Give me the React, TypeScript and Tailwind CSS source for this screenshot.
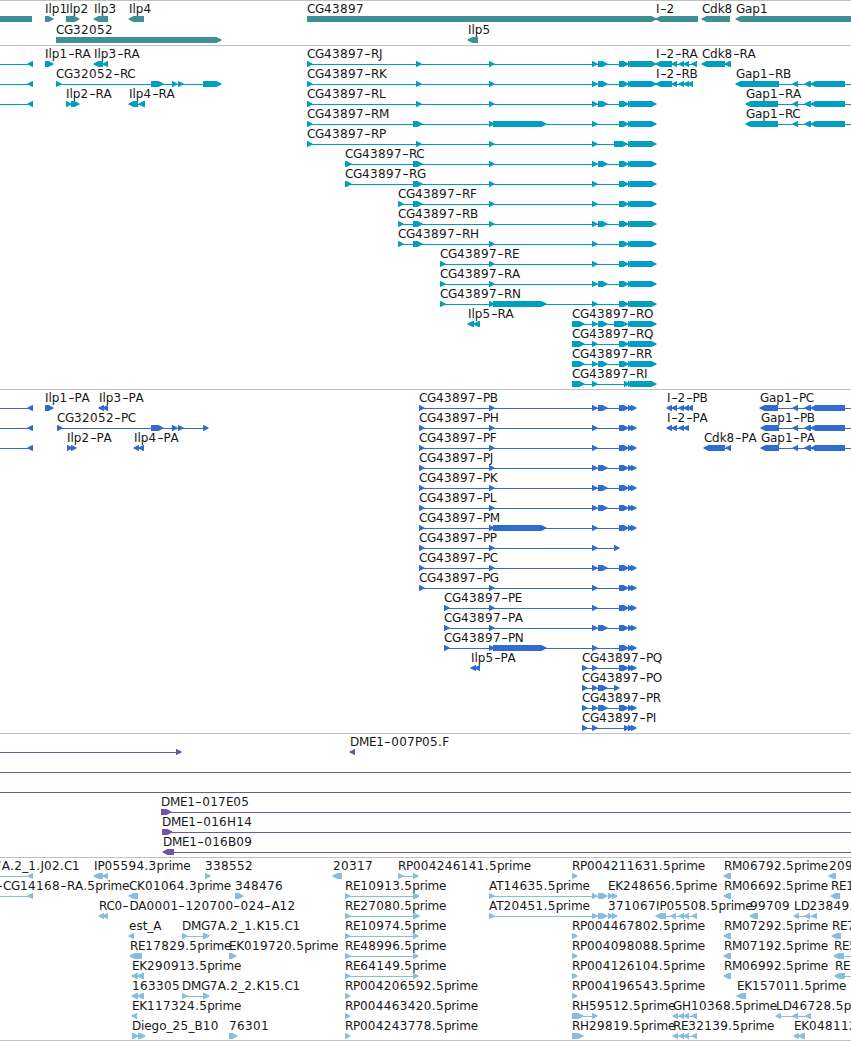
type Block = [number, number];

type Feature = {
  name?: string;
  dir: 'left' | 'right';
  blocks: Block[];
  // connecting line, when it runs past the blocks
  line?: Block;
  labelX?: number;
};

type Track = {
  title: string;
  color: string;
  rowClass: string;
  padClass: string;
  rows: Feature[][];
};

const WIDTH = 851;

const right = (name: string, ...blocks: Block[]): Feature => ({ name, dir: 'right', blocks });
const left = (name: string, ...blocks: Block[]): Feature => ({ name, dir: 'left', blocks });

const e = (x: number): Block => [x, x + 5];

// exons shared by the CG43897 isoforms
const mid: Block = [598, 607];
const long: Block = [493, 546];
const tail: Block[] = [[619, 628], [628, 632], [630, 656]];
const cdsTail: Block[] = [[619, 628], [628, 633], [631, 636]];

const offscreen: Feature = { dir: 'left', blocks: [[28, 33]], line: [0, 33] };

const gap1 = (name: string, a: number, b: number): Feature => ({
  name,
  dir: 'left',
  blocks: [[a, b], [793, 798], [805, 811], [811, 845]],
  line: [a, WIDTH],
});

const genes: Feature[][] = [
  [
    { dir: 'left', blocks: [[-20, 32]] },
    right('Ilp1', [45, 53]),
    right('Ilp2', [66, 79]),
    left('Ilp3', [94, 108]),
    left('Ilp4', [129, 144]),
    right('CG43897', [307, 656]),
    left('I-2', [656, 698]),
    left('Cdk8', [702, 730]),
    left('Gap1', [736, 870]),
  ],
  [right('CG32052', [56, 221]), left('Ilp5', [468, 478])],
];

const transcripts: Feature[][] = [
  [
    offscreen,
    right('Ilp1-RA', [45, 53]),
    left('Ilp3-RA', [94, 103], [103, 108]),
    right('CG43897-RJ', e(307), e(416), e(489), e(592), mid, ...tail),
    left('I-2-RA', [656, 672], [672, 677], [679, 684], [684, 689], [692, 697]),
    left('Cdk8-RA', [702, 725], [725, 731]),
  ],
  [
    offscreen,
    right('CG32052-RC', e(56), [151, 163], e(172), e(178), [203, 221]),
    right('CG43897-RK', e(307), e(416), e(489), e(592), mid, ...tail),
    left('I-2-RB', [656, 672], [672, 677], [679, 684], [684, 689], [688, 693]),
    gap1('Gap1-RB', 736, 779),
  ],
  [
    offscreen,
    right('Ilp2-RA', e(66), [71, 79]),
    left('Ilp4-RA', [129, 138], [139, 145]),
    right('CG43897-RL', e(307), e(416), e(489), e(592), mid, ...tail),
    gap1('Gap1-RA', 746, 778),
  ],
  [
    right('CG43897-RM', e(307), [413, 422], e(489), long, e(592), ...tail),
    gap1('Gap1-RC', 746, 778),
  ],
  [right('CG43897-RP', e(307), e(416), e(489), e(592), [614, 627], [628, 632], [630, 656])],
  [right('CG43897-RC', [345, 351], [413, 422], e(489), e(592), mid, ...tail)],
  [right('CG43897-RG', [345, 351], [413, 422], e(489), e(592), ...tail)],
  [right('CG43897-RF', e(398), [413, 422], e(489), e(592), ...tail)],
  [right('CG43897-RB', e(398), [413, 422], e(489), e(592), mid, ...tail)],
  [right('CG43897-RH', e(398), [413, 422], e(489), e(592), ...tail)],
  [right('CG43897-RE', e(440), e(489), e(592), ...tail)],
  [right('CG43897-RA', e(440), e(489), e(592), mid, ...tail)],
  [right('CG43897-RN', e(440), e(489), long, e(592), ...tail)],
  [
    left('Ilp5-RA', [468, 474], [474, 480]),
    right('CG43897-RO', [572, 584], e(592), mid, [614, 627], [628, 632], [630, 656]),
  ],
  [right('CG43897-RQ', [572, 584], e(592), ...tail)],
  [right('CG43897-RR', [572, 584], e(592), mid, ...tail)],
  [right('CG43897-RI', [572, 584], e(592), e(624), [628, 632], [630, 656])],
];

const proteins: Feature[][] = [
  [
    offscreen,
    right('Ilp1-PA', [45, 53]),
    left('Ilp3-PA', e(99), e(103)),
    right('CG43897-PB', e(419), e(489), e(592), mid, ...cdsTail),
    left('I-2-PB', e(667), e(672), e(679), e(684), e(688)),
    gap1('Gap1-PC', 760, 778),
  ],
  [
    offscreen,
    right('CG32052-PC', e(57), [151, 163], e(172), e(178), e(203)),
    right('CG43897-PH', e(419), e(489), e(592), ...cdsTail),
    left('I-2-PA', e(667), e(672), e(679), e(684)),
    gap1('Gap1-PB', 761, 779),
  ],
  [
    offscreen,
    right('Ilp2-PA', e(67), e(71)),
    left('Ilp4-PA', e(134), e(139)),
    right('CG43897-PF', e(419), e(489), e(592), ...cdsTail),
    left('Cdk8-PA', [704, 725], e(726)),
    gap1('Gap1-PA', 761, 779),
  ],
  [right('CG43897-PJ', e(419), e(489), e(592), mid, ...cdsTail)],
  [right('CG43897-PK', e(419), e(489), e(592), mid, ...cdsTail)],
  [right('CG43897-PL', e(419), e(489), e(592), mid, ...cdsTail)],
  [right('CG43897-PM', e(419), e(489), long, e(592), ...cdsTail)],
  [right('CG43897-PP', e(419), e(489), e(592), e(614))],
  [right('CG43897-PC', e(419), e(489), e(592), mid, ...cdsTail)],
  [right('CG43897-PG', e(419), e(489), e(592), ...cdsTail)],
  [right('CG43897-PE', e(444), e(489), e(592), ...cdsTail)],
  [right('CG43897-PA', e(444), e(489), e(592), mid, ...cdsTail)],
  [right('CG43897-PN', e(444), e(489), long, e(592), ...cdsTail)],
  [
    left('Ilp5-PA', e(471), e(475)),
    right('CG43897-PQ', e(582), e(592), ...cdsTail),
  ],
  [right('CG43897-PO', e(582), e(592), mid, e(614))],
  [right('CG43897-PR', e(582), e(592), mid, ...cdsTail)],
  [right('CG43897-PI', e(582), e(592), e(624), e(628), e(631))],
];

const clones: Feature[][] = [
  [
    { dir: 'right', blocks: [e(176)], line: [0, 181] },
    left('DME1-007P05.F', e(350)),
  ],
  [{ dir: 'right', blocks: [], line: [0, WIDTH] }],
  [{ dir: 'right', blocks: [], line: [0, WIDTH] }],
  [{ name: 'DME1-017E05', dir: 'right', blocks: [[161, 171]], line: [161, WIDTH] }],
  [{ name: 'DME1-016H14', dir: 'right', blocks: [[162, 172]], line: [162, WIDTH] }],
  [{ name: 'DME1-016B09', dir: 'left', blocks: [[163, 174]], line: [163, WIDTH] }],
];

const ests: Feature[][] = [
  [
    { ...offscreen, name: 'DMG7A.2_1.J02.C1', labelX: -34 },
    left('IP05594.3prime', [94, 103], [103, 108]),
    right('338552', e(205)),
    left('20317', [333, 342]),
    right('RP004246141.5prime', e(398), e(413)),
    right('RP004211631.5prime', e(572)),
    left('RM06792.5prime', [724, 731]),
    left('209', [829, 836]),
  ],
  [
    { ...offscreen, name: '-CG14168-RA.5prime', labelX: -4 },
    left('CK01064.3prime', [129, 138]),
    right('348476', [235, 243]),
    right('RE10913.5prime', e(345), [413, 419]),
    right('AT14635.5prime', e(489), e(592), mid),
    right('EK248656.5prime', e(608), e(612)),
    left('RM06692.5prime', [724, 731]),
    left('RE1', [831, 840]),
  ],
  [
    left('RC0-DA0001-120700-024-A12', e(99), e(103)),
    right('RE27080.5prime', e(345), [413, 419]),
    right('AT20451.5prime', e(489), e(592), mid),
    right('371067', e(608), e(612)),
    left('IP05508.5prime', [656, 666], e(671), e(679), e(684), e(692)),
    left('99709', [750, 758]),
    left('LD23849.', e(794), e(805), e(812)),
  ],
  [
    left('est_A', e(129)),
    right('DMG7A.2_1.K15.C1', e(182), [203, 209]),
    right('RE10974.5prime', e(345), e(413)),
    right('RP004467802.5prime', e(572)),
    left('RM07292.5prime', [724, 731]),
    left('RE7', [832, 841]),
  ],
  [
    left('RE17829.5prime', [130, 142]),
    right('EK019720.5prime', [229, 236]),
    right('RE48996.5prime', e(345), e(413)),
    right('RP004098088.5prime', e(572)),
    left('RM07192.5prime', [724, 731]),
    { name: 'RE5', dir: 'left', blocks: [[834, 844]], line: [834, WIDTH] },
  ],
  [
    left('EK290913.5prime', [132, 138], [138, 144]),
    right('RE64149.5prime', e(345), e(413)),
    right('RP004126104.5prime', e(572)),
    left('RM06992.5prime', [724, 731]),
    { name: 'RE', dir: 'left', blocks: [[835, 845]], line: [835, WIDTH] },
  ],
  [
    left('163305', [132, 138], [138, 144]),
    right('DMG7A.2_2.K15.C1', e(182), [203, 209]),
    right('RP004206592.5prime', e(345)),
    right('RP004196543.5prime', e(572)),
    left('EK157011.5prime', [737, 746]),
  ],
  [
    left('EK117324.5prime', e(132)),
    right('RP004463420.5prime', e(345)),
    right('RH59512.5prime', [572, 583], e(592)),
    left('GH10368.5prime', e(673), e(679), e(684), e(692)),
    left('LD46728.5prime', e(776), [793, 798], e(806)),
  ],
  [
    right('Diego_25_B10', [132, 138], [138, 145]),
    right('76301', [229, 237]),
    right('RP004243778.5prime', e(345)),
    right('RH29819.5prime', [572, 583]),
    left('RE32139.5prime', e(673), e(679), e(684), e(692)),
    left('EK048112', e(794), [799, 805]),
  ],
];

const tracks: Track[] = [
  { title: 'genes', color: 'text-[#3f8f94]', rowClass: 'h-[21px]', padClass: 'pt-px pb-px', rows: genes },
  { title: 'transcripts', color: 'text-[#009fc0]', rowClass: 'h-5', padClass: 'pt-px pb-0.5', rows: transcripts },
  { title: 'proteins', color: 'text-[#306ccf]', rowClass: 'h-5', padClass: 'pt-px pb-0.5', rows: proteins },
  { title: 'clones', color: 'text-[#7355a8]', rowClass: 'h-5', padClass: 'pt-px pb-0.5', rows: clones },
  { title: 'ests', color: 'text-[#87bddf]', rowClass: 'h-5', padClass: 'pt-px pb-px', rows: ests },
];

// blocks are 6px tall and end in a blunt point
function blockPoints([a, b]: Block, dir: 'left' | 'right') {
  // bars that start off the left edge have a flat end
  if (a < 0) return `${a},14 ${b},14 ${b},20 ${a},20`;
  const head = Math.min(5, b - a);
  if (dir === 'right') {
    const n = b - head;
    return `${a},14 ${n + 0.5},14 ${b + 0.5},16.5 ${b + 0.5},17.5 ${n + 0.5},20 ${a},20`;
  }
  const n = a + head;
  return `${b},14 ${n - 0.5},14 ${a - 0.5},16.5 ${a - 0.5},17.5 ${n - 0.5},20 ${b},20`;
}

function Glyph({ feature }: { feature: Feature }) {
  const { blocks, dir, line } = feature;
  const span = line ?? [blocks[0][0], blocks[blocks.length - 1][1]];
  return (
    <g>
      {(line || blocks.length > 1) && (
        <rect x={span[0]} y={17} width={span[1] - span[0]} height={1} />
      )}
      {blocks.map((block, i) => (
        <polygon key={i} points={blockPoints(block, dir)} />
      ))}
    </g>
  );
}

// whole-pixel advances: digits run a bit wide, wide capitals a bit tight
function Label({ text, x }: { text: string; x: number }) {
  return (
    <span
      className="absolute top-0 whitespace-pre text-[12px] leading-[14px] text-neutral-900"
      style={{ left: x }}
    >
      {text.split(/(-|[0-9.]+|[CDEGMPR]+|prime)/).map((part, i) => {
        if (part === '-') {
          return (
            <span key={i} className="inline-block w-[7px] scale-x-150 text-center">
              -
            </span>
          );
        }
        if (/^[0-9.]/.test(part)) {
          return <span key={i} className="tracking-[0.35px]">{part}</span>;
        }
        if (/^[CDEGMPR]/.test(part)) {
          return <span key={i} className="tracking-[-0.35px]">{part}</span>;
        }
        if (part === 'prime') {
          return <span key={i} className="tracking-[-0.2px]">{part}</span>;
        }
        return part;
      })}
    </span>
  );
}

function Row({ features, className }: { features: Feature[]; className: string }) {
  return (
    <div className={`relative ${className}`}>
      <svg className="block h-5 w-full fill-current" aria-hidden="true">
        {features.map((feature, i) => (
          <Glyph key={i} feature={feature} />
        ))}
      </svg>
      {features.map(
        (feature) =>
          feature.name && (
            <Label
              key={feature.name}
              text={feature.name}
              x={feature.labelX ?? feature.blocks[0][0]}
            />
          ),
      )}
    </div>
  );
}

export default function App() {
  return (
    <main className="h-[1041px] w-[851px] overflow-hidden border-b border-[#c0c0c0] bg-white font-['DejaVu_Sans',sans-serif]">
      {tracks.map((track) => (
        <section
          key={track.title}
          className={`border-t border-[#c0c0c0] ${track.padClass} ${track.color}`}
        >
          {track.rows.map((row, i) => (
            <Row key={i} features={row} className={track.rowClass} />
          ))}
        </section>
      ))}
    </main>
  );
}
